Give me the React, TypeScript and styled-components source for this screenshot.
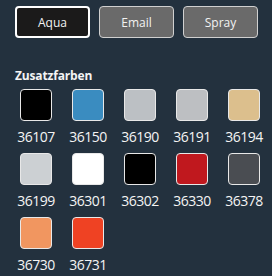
import React from "react";
import styled, { createGlobalStyle } from "styled-components";

const GlobalStyle = createGlobalStyle`
  html, body {
    margin: 0;
    padding: 0;
    background: #23313e;
  }
  body {
    font-family: "Open Sans", "Liberation Sans", sans-serif;
  }
`;

type Swatch = { code: string; color: string };

const swatches: Swatch[] = [
  { code: "36107", color: "#000000" },
  { code: "36150", color: "#3a8cc0" },
  { code: "36190", color: "#bcc0c4" },
  { code: "36191", color: "#bdbfc2" },
  { code: "36194", color: "#dcbf8d" },
  { code: "36199", color: "#ccd0d3" },
  { code: "36301", color: "#ffffff" },
  { code: "36302", color: "#000000" },
  { code: "36330", color: "#c0181e" },
  { code: "36378", color: "#4a4d52" },
  { code: "36730", color: "#f19660" },
  { code: "36731", color: "#ef4223" },
];

const App = () => {
  return (
    <Wrapper>
      <GlobalStyle />
      <Tabs>
        <Tab active>Aqua</Tab>
        <Tab>Email</Tab>
        <Tab>Spray</Tab>
      </Tabs>
      <Title>Zusatzfarben</Title>
      <Grid>
        {swatches.map((s) => (
          <Item key={s.code}>
            <Box color={s.color} />
            <Code>{s.code}</Code>
          </Item>
        ))}
      </Grid>
    </Wrapper>
  );
};

const Wrapper = styled.div`
  width: 272px;
  height: 276px;
  background: #23313e;
  padding: 6px 0 0 0;
  box-sizing: border-box;
`;

const Tabs = styled.div`
  display: flex;
  gap: 9px;
  padding-left: 15px;
`;

const Tab = styled.div<{ active?: boolean }>`
  width: 75px;
  height: 32px;
  box-sizing: border-box;
  display: flex;
  align-items: center;
  justify-content: center;
  border-radius: 4px;
  font-size: 12px;
  color: #f2f2f2;
  background: ${(p) => (p.active ? "#1b1a1a" : "#6a6a6a")};
  border: ${(p) => (p.active ? "2px solid #ffffff" : "1px solid #d0d0d0")};
`;

const Title = styled.div`
  margin: 30px 0 0 15px;
  font-size: 12px;
  font-weight: 700;
  letter-spacing: -0.15px;
  color: #f4f4f4;
  line-height: 16px;
`;

const Grid = styled.div`
  display: grid;
  grid-template-columns: repeat(5, 52px);
  padding-left: 10px;
  margin-top: 5px;
`;

const Item = styled.div`
  display: flex;
  flex-direction: column;
  align-items: center;
  height: 64px;
`;

const Box = styled.div<{ color: string }>`
  width: 32px;
  height: 32px;
  box-sizing: border-box;
  border-radius: 4px;
  border: 1px solid #e8e8e8;
  background: ${(p) => p.color};
`;

const Code = styled.div`
  margin-top: 7px;
  font-size: 14px;
  letter-spacing: -0.5px;
  line-height: 18px;
  color: #f4f4f4;
`;

export default App;
